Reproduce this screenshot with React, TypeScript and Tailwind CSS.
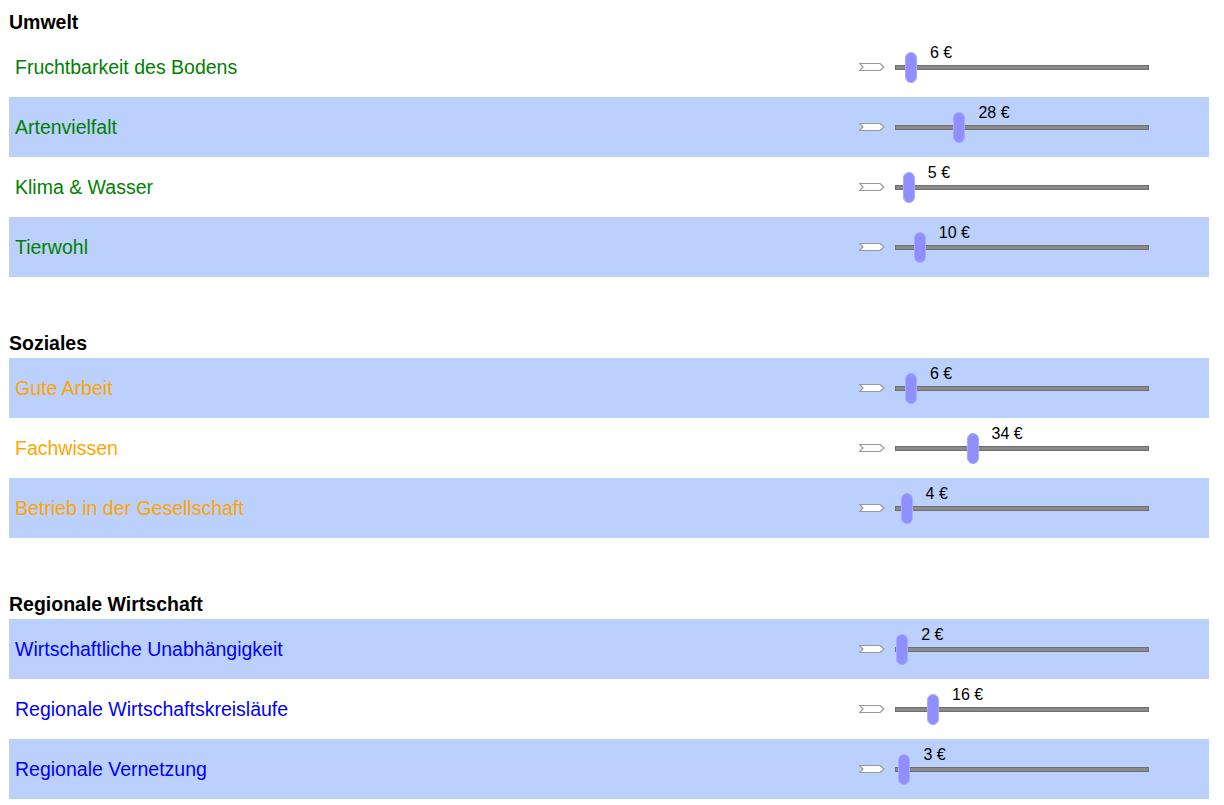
import React from 'react'

type Item = { label: string; value: number; shaded: boolean }
type Section = { title: string; color: string; items: Item[] }

const sections: Section[] = [
  {
    title: 'Umwelt',
    color: 'text-[#008000]',
    items: [
      { label: 'Fruchtbarkeit des Bodens', value: 6, shaded: false },
      { label: 'Artenvielfalt', value: 28, shaded: true },
      { label: 'Klima & Wasser', value: 5, shaded: false },
      { label: 'Tierwohl', value: 10, shaded: true },
    ],
  },
  {
    title: 'Soziales',
    color: 'text-[#ffa500]',
    items: [
      { label: 'Gute Arbeit', value: 6, shaded: true },
      { label: 'Fachwissen', value: 34, shaded: false },
      { label: 'Betrieb in der Gesellschaft', value: 4, shaded: true },
    ],
  },
  {
    title: 'Regionale Wirtschaft',
    color: 'text-[#0000ff]',
    items: [
      { label: 'Wirtschaftliche Unabhängigkeit', value: 2, shaded: true },
      { label: 'Regionale Wirtschaftskreisläufe', value: 16, shaded: false },
      { label: 'Regionale Vernetzung', value: 3, shaded: true },
    ],
  },
]

function Marker() {
  return (
    <svg width="26" height="8" viewBox="0 0 26 8" className="shrink-0">
      <polygon points="0.5,0.5 21,0.5 25,4 21,7.5 0.5,7.5 4,4" fill="#ffffff" stroke="#9a9a9a" strokeWidth="1.2" />
    </svg>
  )
}

function Slider({ value }: { value: number }) {
  const center = 1.8 + value * 2.2
  return (
    <div className="flex items-center w-[350px] shrink-0">
      <Marker />
      <div className="relative ml-[10px] w-[254px] h-[5px] bg-[#8a8a8a] border border-[#6e6e6e]">
        <div
          className="absolute top-[-14px] w-[12px] h-[31px] rounded-[6px] bg-[#8f8fff] border border-[#a9a9ff]"
          style={{ left: center - 6 }}
        />
        <span
          className="absolute top-[-21px] text-[16px] leading-[16px] text-black whitespace-nowrap"
          style={{ left: center + 19 }}
        >
          {value} €
        </span>
      </div>
    </div>
  )
}

export default function App() {
  return (
    <div className="bg-white min-h-screen px-[9px] pb-2 font-['Liberation_Sans',Arial,sans-serif]">
      {sections.map((s, i) => (
        <div key={s.title} className={i > 0 ? 'mt-[44px]' : ''}>
          <h2 className="pt-[12px] pb-[4px] text-[19.5px] leading-[21px] font-bold text-black">{s.title}</h2>
          {s.items.map((it) => (
            <div
              key={it.label}
              className={`flex items-center h-[60px] w-[1200px] ${it.shaded ? 'bg-[#bbd0fc]' : 'bg-white'}`}
            >
              <span className={`flex-1 pl-[6px] text-[19.5px] leading-[21px] ${s.color}`}>{it.label}</span>
              <Slider value={it.value} />
            </div>
          ))}
        </div>
      ))}
    </div>
  )
}
